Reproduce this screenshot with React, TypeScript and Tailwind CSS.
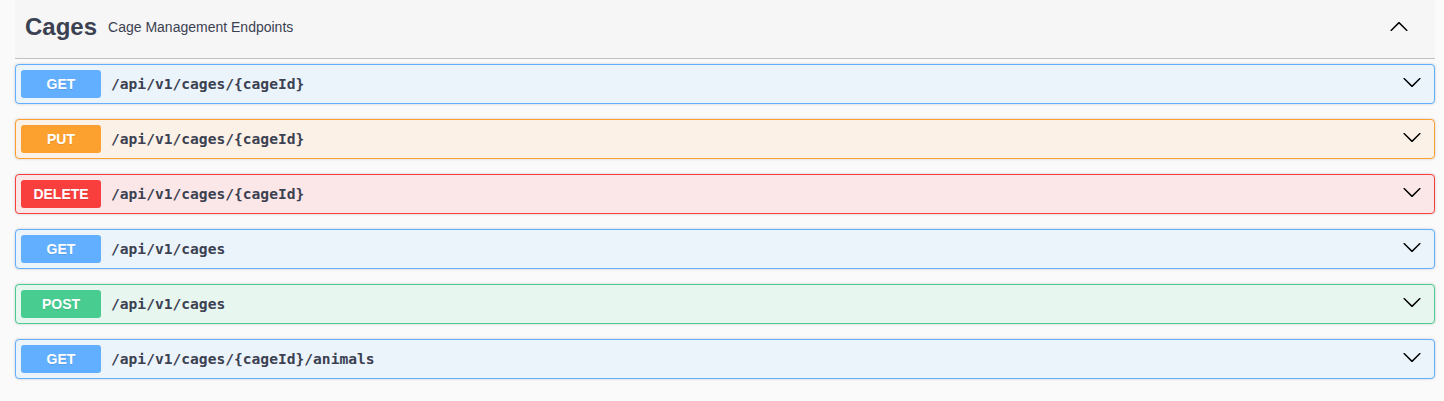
import React from "react";

type Op = { method: string; path: string; badge: string; border: string; bg: string };

const ops: Op[] = [
  { method: "GET", path: "/api/v1/cages/{cageId}", badge: "bg-[#61affe]", border: "border-[#61affe]", bg: "bg-[#ebf3fb]" },
  { method: "PUT", path: "/api/v1/cages/{cageId}", badge: "bg-[#fca130]", border: "border-[#fca130]", bg: "bg-[#fbf1e6]" },
  { method: "DELETE", path: "/api/v1/cages/{cageId}", badge: "bg-[#f93e3e]", border: "border-[#f93e3e]", bg: "bg-[#fbe7e7]" },
  { method: "GET", path: "/api/v1/cages", badge: "bg-[#61affe]", border: "border-[#61affe]", bg: "bg-[#ebf3fb]" },
  { method: "POST", path: "/api/v1/cages", badge: "bg-[#49cc90]", border: "border-[#49cc90]", bg: "bg-[#e8f6f0]" },
  { method: "GET", path: "/api/v1/cages/{cageId}/animals", badge: "bg-[#61affe]", border: "border-[#61affe]", bg: "bg-[#ebf3fb]" },
];

const Arrow = ({ up = false }: { up?: boolean }) => (
  <svg width="20" height="20" viewBox="0 0 20 20" className={up ? "rotate-180" : ""} fill="#000">
    <path d="M17.418 6.109c.272-.268.709-.268.979 0s.271.701 0 .969l-7.908 7.83c-.27.268-.707.268-.979 0l-7.908-7.83c-.27-.268-.27-.701 0-.969.271-.268.709-.268.979 0L10 13.25l7.418-7.141z" />
  </svg>
);

export default function App() {
  return (
    <div className="min-h-[401px] w-[1444px] bg-[#fafafa] px-[15px] pr-[9px]" style={{ fontFamily: '"Liberation Sans", Arial, sans-serif' }}>
      <div className="flex h-[59px] items-center border-b border-[rgba(59,65,81,0.3)] bg-[#f6f6f6] pb-[5px] pl-[10px] pr-[26px] text-[#3b4151]">
        <span className="text-[24px] font-bold leading-none">Cages</span>
        <span className="ml-[11px] text-[14px] leading-none">Cage Management Endpoints</span>
        <div className="ml-auto flex items-center">
          <Arrow up />
        </div>
      </div>
      <div className="mt-[5px] flex flex-col gap-[15px]">
        {ops.map((op, i) => (
          <div
            key={i}
            className={`flex h-[40px] items-center rounded-[4px] border ${op.border} ${op.bg} pl-[5px] pr-[12px] shadow-[0_0_3px_rgba(0,0,0,0.19)]`}
          >
            <span
              className={`flex h-[28px] w-[80px] items-center justify-center rounded-[3px] ${op.badge} text-[14px] font-bold text-white [text-shadow:0_1px_0_rgba(0,0,0,0.1)]`}
            >
              {op.method}
            </span>
            <span
              className="pl-[10px] text-[14.6px] font-bold text-[#3b4151]"
              style={{ fontFamily: '"DejaVu Sans Mono", monospace' }}
            >
              {op.path}
            </span>
            <div className="ml-auto mb-[4px] flex items-center">
              <Arrow />
            </div>
          </div>
        ))}
      </div>
    </div>
  );
}
